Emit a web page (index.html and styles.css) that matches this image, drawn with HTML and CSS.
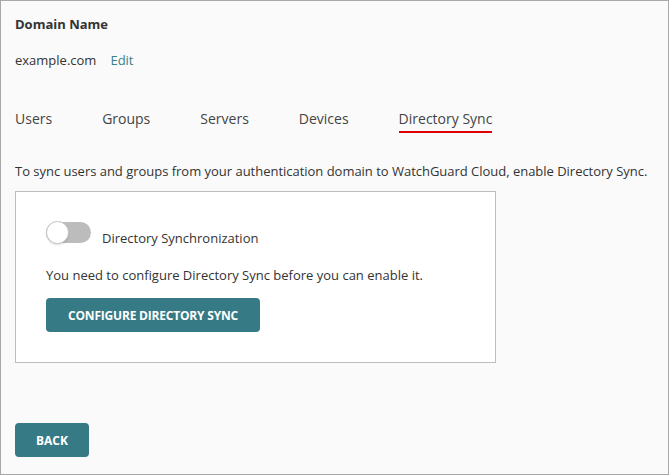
FILE: index.html
```html
<!DOCTYPE html>
<html>
<head>
<meta charset="utf-8">
<link rel="stylesheet" href="styles.css">
</head>
<body>
<div class="page">
  <div class="section-title">Domain Name</div>
  <div class="domain-row">
    <span class="domain">example.com</span>
    <a class="edit">Edit</a>
  </div>
  <div class="tabs">
    <span class="tab">Users</span>
    <span class="tab">Groups</span>
    <span class="tab">Servers</span>
    <span class="tab">Devices</span>
    <span class="tab active">Directory Sync</span>
  </div>
  <p class="desc">To sync users and groups from your authentication domain to WatchGuard Cloud, enable Directory Sync.</p>
  <div class="card">
    <div class="toggle-row">
      <span class="toggle"><span class="knob"></span></span>
      <span class="toggle-label">Directory Synchronization</span>
    </div>
    <p class="note">You need to configure Directory Sync before you can enable it.</p>
    <button class="btn configure">CONFIGURE DIRECTORY SYNC</button>
  </div>
  <button class="btn back">BACK</button>
</div>
</body>
</html>
```
FILE: styles.css
```css
* { box-sizing: border-box; }
html, body { margin: 0; padding: 0; }
body {
  width: 669px;
  height: 475px;
  font-family: "Open Sans", "Liberation Sans", sans-serif;
  color: #333;
  font-size: 13px;
}
.page {
  width: 669px;
  height: 475px;
  border: 1px solid #a8a8a8;
  background: #fafafa;
  padding: 14px 14px 0 14px;
  display: flex;
  flex-direction: column;
  align-items: flex-start;
}
.section-title {
  font-weight: 700;
  font-size: 13px;
  line-height: 18px;
}
.domain-row {
  margin-top: 18px;
  display: flex;
  gap: 14px;
  line-height: 18px;
}
.edit { color: #3a7f8c; }
.tabs {
  margin-top: 40px;
  display: flex;
  font-size: 14px;
  line-height: 20px;
}
.tab {
  margin-right: 50px;
  padding-bottom: 2px;
  color: #444;
}
.tab.active {
  border-bottom: 2px solid #e00000;
  margin-right: 0;
}
.desc {
  margin: 29px 0 0 0;
  line-height: 18px;
  letter-spacing: -0.02px;
}
.card {
  margin-top: 11px;
  width: 481px;
  height: 172px;
  background: #fff;
  border: 1px solid #bdbdbd;
  padding: 29px 30px 0 30px;
}
.toggle-row {
  display: flex;
  align-items: flex-start;
  gap: 10px;
}
.toggle {
  margin-top: 1px;
  width: 45px;
  height: 21px;
  border-radius: 11px;
  background: #bcbcbc;
  position: relative;
}
.knob {
  position: absolute;
  left: 0;
  top: -1px;
  width: 23px;
  height: 23px;
  border-radius: 50%;
  background: #fff;
  border: 1px solid #c4c4c4;
  box-shadow: 0 1px 2px rgba(0,0,0,0.12);
}
.toggle-label { line-height: 18px; padding-top: 8px; margin-left: 1px; }
.note {
  margin: 19px 0 0 0;
  line-height: 18px;
}
.btn {
  font-family: "Open Sans", "Liberation Sans", sans-serif;
  font-weight: 700;
  font-size: 12px;
  color: #fff;
  background: #367a86;
  border: none;
  border-radius: 4px;
  height: 34px;
  padding: 0;
  white-space: nowrap;
}
.configure {
  margin-top: 14px;
  width: 214px;
  letter-spacing: -0.2px;
}
.back {
  margin-top: 60px;
  width: 74px;
}
```
